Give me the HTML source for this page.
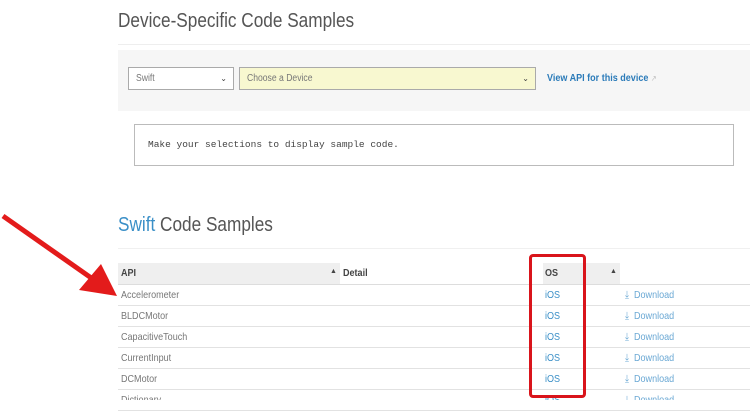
<!DOCTYPE html>
<html><head><style>
body{margin:0;width:750px;height:407px;background:#fff;font-family:"Liberation Sans",sans-serif;position:relative;overflow:hidden;color:#555}
.a{position:absolute}
.c{display:inline-block;transform:scaleX(0.86);transform-origin:0 0;white-space:nowrap}
h1{position:absolute;margin:0;font-weight:normal;font-size:20px;color:#555;left:118px;top:10px}
.sel{position:absolute;top:67px;border:1px solid #aaa;font-size:10px;color:#777;line-height:21px;padding-left:7px;box-sizing:border-box;height:23px}
.sel span.k{position:absolute;right:6px;top:0;font-size:8px;color:#444}
.row{position:absolute;left:118px;width:632px;height:21px;border-bottom:1px solid #e2e2e2;font-size:10.5px;color:#777;line-height:21px}
.row .n{position:absolute;left:3px;top:1px}
.row .o{position:absolute;left:427px;top:1px;color:#3a8fc7}
.row .d{position:absolute;left:507px;top:1px;color:#6aa8d4}
</style></head><body>
<h1><span class="c">Device-Specific Code Samples</span></h1>
<div class="a" style="left:118px;top:44px;width:632px;height:1px;background:#eee"></div>
<div class="a" style="left:118px;top:50px;width:632px;height:61px;background:#f6f6f6"></div>
<div class="sel" style="left:128px;width:106px;background:#fff"><span class="c">Swift</span><span class="k">&#8964;</span></div>
<div class="sel" style="left:239px;width:297px;background:#f8f8d0"><span class="c">Choose a Device</span><span class="k">&#8964;</span></div>
<div class="a" style="left:547px;top:72px;font-size:10.5px;font-weight:bold;color:#2b7bb9"><span class="c">View API for this device <span style="color:#bbb;font-weight:normal;font-size:8px">&#8599;</span></span></div>
<div class="a" style="left:134px;top:124px;width:600px;height:42px;border:1px solid #bbb;box-sizing:border-box;font-family:'Liberation Mono',monospace;font-size:9.5px;color:#444;line-height:40px;padding-left:13px">Make your selections to display sample code.</div>
<div class="a" style="left:118px;top:214px;font-size:20px"><span class="c"><span style="color:#3a8fc7">Swift</span> Code Samples</span></div>
<div class="a" style="left:118px;top:248px;width:632px;height:1px;background:#f0f0f0"></div>
<div class="a" style="left:118px;top:263px;width:222px;height:21px;background:#efefef"></div>
<div class="a" style="left:543px;top:263px;width:77px;height:21px;background:#efefef"></div>
<div class="a" style="left:118px;top:284px;width:632px;height:1px;background:#ddd"></div>
<div class="a" style="left:121px;top:267px;font-size:10.5px;font-weight:bold;color:#444"><span class="c">API</span></div>
<div class="a" style="left:330px;top:268px;font-size:7px;color:#444">&#9650;</div>
<div class="a" style="left:343px;top:267px;font-size:10.5px;font-weight:bold;color:#444"><span class="c">Detail</span></div>
<div class="a" style="left:545px;top:267px;font-size:10.5px;font-weight:bold;color:#444"><span class="c">OS</span></div>
<div class="a" style="left:610px;top:268px;font-size:7px;color:#444">&#9650;</div>
<div class="row" style="top:284px"><span class="n c">Accelerometer</span><span class="o c">iOS</span><span class="d c">&#10515;&nbsp; Download</span></div>
<div class="row" style="top:305px"><span class="n c">BLDCMotor</span><span class="o c">iOS</span><span class="d c">&#10515;&nbsp; Download</span></div>
<div class="row" style="top:326px"><span class="n c">CapacitiveTouch</span><span class="o c">iOS</span><span class="d c">&#10515;&nbsp; Download</span></div>
<div class="row" style="top:347px"><span class="n c">CurrentInput</span><span class="o c">iOS</span><span class="d c">&#10515;&nbsp; Download</span></div>
<div class="row" style="top:368px"><span class="n c">DCMotor</span><span class="o c">iOS</span><span class="d c">&#10515;&nbsp; Download</span></div>
<div class="row" style="top:389px"><span class="n c">Dictionary</span><span class="o c">iOS</span><span class="d c">&#10515;&nbsp; Download</span></div>
<div class="a" style="left:0;top:400px;width:750px;height:7px;background:#fff"></div>
<div class="a" style="left:529px;top:254px;width:57px;height:144px;border:3px solid #d9141b;border-radius:4px;box-sizing:border-box"></div>
<svg class="a" style="left:0;top:0" width="750" height="407">
<line x1="3" y1="216" x2="97" y2="282" stroke="#e31b1b" stroke-width="5"/>
<polygon points="117,296 79,290 101,264" fill="#e31b1b"/>
</svg>
</body></html>
